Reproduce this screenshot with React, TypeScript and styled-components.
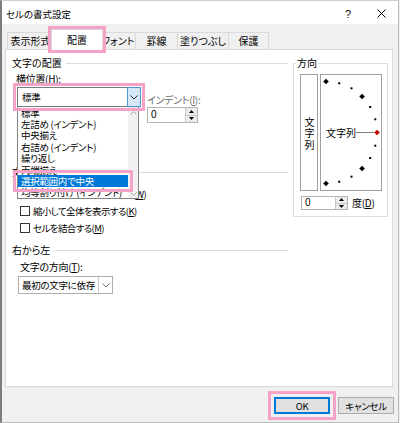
import React from "react";
import styled, { createGlobalStyle } from "styled-components";

const PINK = "#f4a2c8";
const FONT = `"Noto Sans CJK JP", "Noto Sans", sans-serif`;

const GlobalStyle = createGlobalStyle`
  html, body { margin: 0; padding: 0; background: #f0f0f0; }
  body {
    font-family: ${FONT};
    font-size: 10px;
    line-height: 12px;
    color: #000;
    font-feature-settings: "palt" 1;
  }
  * { box-sizing: border-box; }
`;

const Window = styled.div`
  width: 399px;
  height: 423px;
  background: #f0f0f0;
  border-left: 2px solid #7c7c7c;
  border-right: 1px solid #b9b9b9;
  border-top: 1px solid #cfcfcf;
  border-bottom: 1px solid #bdbdbd;
  display: flex;
  flex-direction: column;
`;

const TitleBar = styled.div`
  height: 23px;
  background: #fff;
  display: flex;
  align-items: center;
  padding: 2px 0 0 4px;
`;

const Title = styled.div`
  flex: 1;
  font-size: 9.5px;
`;

const TitleButton = styled.div<{ $w: number }>`
  width: ${(p) => p.$w}px;
  height: 100%;
  display: flex;
  align-items: center;
  justify-content: center;
  font-family: "Liberation Sans", sans-serif;
  font-size: 11px;
`;

const TabRow = styled.div`
  height: 25px;
  display: flex;
  align-items: flex-end;
  padding-left: 5px;
`;

const Tab = styled.div<{ $w: number; $active?: boolean }>`
  width: ${(p) => p.$w}px;
  height: ${(p) => (p.$active ? 21 : 17)}px;
  border: 1px solid #d9d9d9;
  border-bottom: none;
  background: ${(p) => (p.$active ? "#fff" : "#f0f0f0")};
  display: flex;
  align-items: center;
  justify-content: center;
  white-space: nowrap;
  padding-bottom: ${(p) => (p.$active ? 1 : 0)}px;
  margin-left: ${(p) => (p.$active ? -3 : -1)}px;
  margin-right: ${(p) => (p.$active ? -2 : 0)}px;
  margin-bottom: ${(p) => (p.$active ? -1 : 0)}px;
  position: ${(p) => (p.$active ? "relative" : "static")};
  z-index: ${(p) => (p.$active ? 2 : "auto")};
  outline: ${(p) => (p.$active ? `3px solid ${PINK}` : "none")};
  &:first-child { margin-left: 0; }
`;

const Panel = styled.div`
  margin-left: 3px;
  width: 388px;
  height: 338px;
  background: #fff;
  border: 1px solid #d9d9d9;
  padding: 7px 4px 0 6px;
  display: flex;
  align-items: flex-start;
  gap: 5px;
`;

const LeftCol = styled.div`
  width: 276px;
  display: flex;
  flex-direction: column;
`;

const SectionHeader = styled.div<{ $mt?: number }>`
  height: 12px;
  margin-top: ${(p) => p.$mt ?? 0}px;
  display: flex;
  align-items: center;
  gap: 4px;
  white-space: nowrap;
  &::after {
    content: "";
    flex: 1;
    height: 1px;
    background: #dcdcdc;
  }
`;

const HAlignRow = styled.div`
  display: flex;
  margin-top: 4px;
  margin-left: 4px;
`;

const FieldCol = styled.div`
  display: flex;
  flex-direction: column;
`;

const IndentCol = styled.div`
  display: flex;
  flex-direction: column;
  margin-left: 6px;
  padding-top: 21px;
`;

const FieldLabel = styled.div<{ $disabled?: boolean; $mt?: number; $ml?: number }>`
  height: 12px;
  white-space: nowrap;
  letter-spacing: -0.3px;
  color: ${(p) => (p.$disabled ? "#6d6d6d" : "#000")};
  margin-top: ${(p) => p.$mt ?? 0}px;
  margin-left: ${(p) => p.$ml ?? 0}px;
`;

const U = styled.span`
  text-decoration: underline;
  text-underline-offset: 1px;
`;

const ComboField = styled.div`
  position: relative;
  z-index: 5;
  margin-top: 2px;
  margin-left: 1px;
`;

const Combo = styled.div<{ $w: number; $h: number; $focus?: boolean; $ml?: number; $mt?: number }>`
  position: relative;
  z-index: 2;
  width: ${(p) => p.$w}px;
  height: ${(p) => p.$h}px;
  margin-left: ${(p) => p.$ml ?? 0}px;
  margin-top: ${(p) => p.$mt ?? 0}px;
  background: #fff;
  border: 1px solid ${(p) => (p.$focus ? "#7a7a7a" : "#adadad")};
  display: flex;
  align-items: stretch;
  outline: ${(p) => (p.$focus ? `3px solid ${PINK}` : "none")};
  outline-offset: 1px;
`;

const ComboValue = styled.div<{ $pl: number }>`
  flex: 1;
  display: flex;
  align-items: center;
  padding-left: ${(p) => p.$pl}px;
  white-space: nowrap;
  overflow: hidden;
  font-size: 9.5px;
  letter-spacing: -0.3px;
`;

const DropButton = styled.div<{ $hot?: boolean }>`
  width: 14px;
  flex: none;
  margin: ${(p) => (p.$hot ? "-1px -1px -1px 0" : "0")};
  background: ${(p) => (p.$hot ? "#d5e8f8" : "#fff")};
  border: ${(p) => (p.$hot ? "1px solid #4f93d2" : "none")};
  border-left: 1px solid ${(p) => (p.$hot ? "#4f93d2" : "#c8c8c8")};
  display: flex;
  align-items: center;
  justify-content: center;
`;

const DropList = styled.div`
  position: absolute;
  top: 19px;
  left: 0;
  width: 122px;
  height: 93px;
  background: #fff;
  border: 1px solid #828282;
  display: flex;
`;

const ListItems = styled.div`
  flex: 1;
  display: flex;
  flex-direction: column;
`;

const ListItem = styled.div<{ $selected?: boolean }>`
  height: 11.4px;
  flex: none;
  display: flex;
  align-items: center;
  padding-left: 3px;
  white-space: nowrap;
  font-size: 9.5px;
  letter-spacing: -0.3px;
  background: ${(p) => (p.$selected ? "#0078d7" : "transparent")};
  color: ${(p) => (p.$selected ? "#fff" : "#000")};
  position: ${(p) => (p.$selected ? "relative" : "static")};
  z-index: ${(p) => (p.$selected ? 3 : "auto")};
  outline: ${(p) => (p.$selected ? `3px solid ${PINK}` : "none")};
  outline-offset: 2px;
`;

const ScrollBar = styled.div`
  width: 10px;
  background: #f0f0f0;
  display: flex;
  flex-direction: column;
  justify-content: space-between;
  align-items: center;
  padding: 4px 0 2px;
`;

const SpinBox = styled.div<{ $w: number; $h: number; $mt?: number; $ml?: number }>`
  width: ${(p) => p.$w}px;
  height: ${(p) => p.$h}px;
  margin-top: ${(p) => p.$mt ?? 0}px;
  margin-left: ${(p) => p.$ml ?? 0}px;
  border: 1px solid #b5b5b5;
  background: #fff;
  display: flex;
`;

const SpinValue = styled.div`
  flex: 1;
  display: flex;
  align-items: center;
  padding-left: 3px;
  font-family: "Liberation Sans", sans-serif;
  font-size: 10px;
`;

const SpinButtons = styled.div`
  width: 12px;
  display: flex;
  flex-direction: column;
  border-left: 1px solid #c8c8c8;
`;

const SpinHalf = styled.div`
  flex: 1;
  background: #ececec;
  display: flex;
  align-items: center;
  justify-content: center;
  & + & { border-top: 1px solid #c8c8c8; }
`;

const CheckList = styled.div`
  margin-top: 10px;
  margin-left: 8px;
  display: flex;
  flex-direction: column;
  gap: 5px;
`;

const CheckRow = styled.label`
  height: 12px;
  display: flex;
  align-items: center;
  gap: 3px;
  white-space: nowrap;
  font-size: 9.5px;
  letter-spacing: -0.6px;
`;

const CheckBox = styled.span`
  width: 10px;
  height: 10px;
  border: 1px solid #333;
  background: #fff;
  flex: none;
`;

const Orientation = styled.fieldset`
  width: 95px;
  margin: 0;
  padding: 5px 5px 6px 6px;
  border: 1px solid #dcdcdc;
  min-width: 0;
`;

const Legend = styled.legend`
  padding: 0 1px;
  margin-left: -4px;
  line-height: 12px;
  font-size: 10px;
`;

const DialRow = styled.div`
  display: flex;
  gap: 2px;
`;

const VerticalBox = styled.div`
  width: 18px;
  height: 117px;
  border: 1px solid #a0a0a0;
  display: flex;
  align-items: center;
  justify-content: center;
  writing-mode: vertical-rl;
  text-orientation: upright;
  letter-spacing: 1.5px;
  padding-top: 4px;
`;

const DialBox = styled.div`
  position: relative;
  width: 62px;
  height: 117px;
  border: 1px solid #a0a0a0;
  display: flex;
  align-items: center;
  padding-left: 5px;
`;

const DialSvg = styled.svg`
  position: absolute;
  inset: 0;
`;

const DialText = styled.span`
  position: relative;
  white-space: nowrap;
`;

const DegreeRow = styled.div`
  display: flex;
  align-items: center;
  gap: 4px;
  margin-top: 5px;
  letter-spacing: -0.3px;
`;

const Footer = styled.div`
  flex: 1;
  display: flex;
  justify-content: flex-end;
  align-items: flex-start;
  gap: 8px;
  padding: 10px 4px 0 0;
`;

const Button = styled.div<{ $primary?: boolean }>`
  width: 56px;
  height: 17px;
  background: #e1e1e1;
  border: ${(p) => (p.$primary ? "2px solid #0078d7" : "1px solid #adadad")};
  display: flex;
  align-items: center;
  justify-content: center;
  font-size: 9.5px;
  letter-spacing: -0.3px;
  outline: ${(p) => (p.$primary ? `3px solid ${PINK}` : "none")};
  outline-offset: 3px;
`;

const Chevron = ({ color = "#222" }: { color?: string }) => (
  <svg width="8" height="5" viewBox="0 0 8 5">
    <polyline points="0.5,0.5 4,4 7.5,0.5" fill="none" stroke={color} strokeWidth="1" />
  </svg>
);

const ScrollChevron = ({ up }: { up?: boolean }) => (
  <svg width="7" height="4" viewBox="0 0 7 4">
    <polyline
      points={up ? "0.5,3.5 3.5,0.5 6.5,3.5" : "0.5,0.5 3.5,3.5 6.5,0.5"}
      fill="none"
      stroke="#a8a8a8"
      strokeWidth="1"
    />
  </svg>
);

const Tri = ({ up }: { up?: boolean }) => (
  <svg width="5" height="3" viewBox="0 0 5 3">
    <polygon points={up ? "0,3 2.5,0 5,3" : "0,0 2.5,3 5,0"} fill="#000" />
  </svg>
);

const CloseIcon = () => (
  <svg width="9" height="9" viewBox="0 0 9 9">
    <path d="M0.5 0.5 L8.5 8.5 M8.5 0.5 L0.5 8.5" stroke="#000" strokeWidth="1" />
  </svg>
);

const Spin = () => (
  <SpinButtons>
    <SpinHalf><Tri up /></SpinHalf>
    <SpinHalf><Tri /></SpinHalf>
  </SpinButtons>
);

const Dial = () => {
  const cx = 5;
  const cy = 57.5;
  const r = 51;
  const angles = [90, 75, 60, 45, 30, 15, 0, -15, -30, -45, -60, -75, -90];
  return (
    <DialSvg width="60" height="115" viewBox="0 0 60 115">
      <line x1="35" y1="57.5" x2="53" y2="57.5" stroke="#7f7f7f" strokeWidth="1" />
      {angles.map((a) => {
        const rad = (a * Math.PI) / 180;
        const x = cx + r * Math.cos(rad);
        const y = cy - r * Math.sin(rad);
        const big = Math.abs(a) === 90 || Math.abs(a) === 45 || a === 0;
        if (big) {
          const h = 2.8;
          return (
            <polygon
              key={a}
              points={`${x},${y - h} ${x + h},${y} ${x},${y + h} ${x - h},${y}`}
              fill={a === 0 ? "#c00000" : "#000"}
            />
          );
        }
        return <rect key={a} x={x - 1} y={y - 1} width="2" height="2" fill="#000" />;
      })}
    </DialSvg>
  );
};

const tabs = [
  { label: "表示形式", w: 47 },
  { label: "配置", w: 52, active: true },
  { label: "フォント", w: 36 },
  { label: "罫線", w: 43 },
  { label: "塗りつぶし", w: 52 },
  { label: "保護", w: 41 },
];

const hAlignItems = [
  "標準",
  "左詰め (インデント)",
  "中央揃え",
  "右詰め (インデント)",
  "繰り返し",
  "両端揃え",
  "選択範囲内で中央",
  "均等割り付け (インデント)",
];

export default function App() {
  return (
    <>
      <GlobalStyle />
      <Window>
        <TitleBar>
          <Title>セルの書式設定</Title>
          <TitleButton $w={34}>?</TitleButton>
          <TitleButton $w={33}>
            <CloseIcon />
          </TitleButton>
        </TitleBar>

        <TabRow>
          {tabs.map((t) => (
            <Tab key={t.label} $w={t.w} $active={t.active}>
              {t.label}
            </Tab>
          ))}
        </TabRow>

        <Panel>
          <LeftCol>
            <SectionHeader>文字の配置</SectionHeader>
            <HAlignRow>
              <FieldCol>
                <FieldLabel>
                  横位置(<U>H</U>):
                </FieldLabel>
                <ComboField>
                  <Combo $w={124} $h={20} $focus>
                    <ComboValue $pl={4}>標準</ComboValue>
                    <DropButton $hot>
                      <Chevron />
                    </DropButton>
                  </Combo>
                  <DropList>
                    <ListItems>
                      {hAlignItems.map((it) => (
                        <ListItem key={it} $selected={it === "選択範囲内で中央"}>
                          {it}
                        </ListItem>
                      ))}
                    </ListItems>
                    <ScrollBar>
                      <ScrollChevron up />
                      <ScrollChevron />
                    </ScrollBar>
                  </DropList>
                </ComboField>
              </FieldCol>
              <IndentCol>
                <FieldLabel $disabled>
                  インデント(<U>I</U>):
                </FieldLabel>
                <SpinBox $w={51} $h={16} $mt={1}>
                  <SpinValue>0</SpinValue>
                  <Spin />
                </SpinBox>
              </IndentCol>
            </HAlignRow>

            <FieldLabel $mt={2} $ml={6}>
              縦位置(<U>V</U>):
            </FieldLabel>
            <Combo $w={118} $h={18} $ml={6} $mt={2}>
              <ComboValue $pl={3}>中央揃え</ComboValue>
              <DropButton>
                <Chevron color="#7a7a7a" />
              </DropButton>
            </Combo>

            <SectionHeader $mt={9}>文字の制御</SectionHeader>
            <CheckList>
              <CheckRow>
                <CheckBox />
                <span>
                  折り返して全体を表示する(<U>W</U>)
                </span>
              </CheckRow>
              <CheckRow>
                <CheckBox />
                <span>
                  縮小して全体を表示する(<U>K</U>)
                </span>
              </CheckRow>
              <CheckRow>
                <CheckBox />
                <span>
                  セルを結合する(<U>M</U>)
                </span>
              </CheckRow>
            </CheckList>

            <SectionHeader $mt={10}>右から左</SectionHeader>
            <FieldLabel $mt={5} $ml={8}>
              文字の方向(<U>T</U>):
            </FieldLabel>
            <Combo $w={95} $h={18} $ml={6} $mt={3}>
              <ComboValue $pl={3}>最初の文字に依存</ComboValue>
              <DropButton>
                <Chevron color="#7a7a7a" />
              </DropButton>
            </Combo>
          </LeftCol>

          <Orientation>
            <Legend>方向</Legend>
            <DialRow>
              <VerticalBox>文字列</VerticalBox>
              <DialBox>
                <Dial />
                <DialText>文字列</DialText>
              </DialBox>
            </DialRow>
            <DegreeRow>
              <SpinBox $w={47} $h={14} $ml={1}>
                <SpinValue>0</SpinValue>
                <Spin />
              </SpinBox>
              <span>
                度(<U>D</U>)
              </span>
            </DegreeRow>
          </Orientation>
        </Panel>

        <Footer>
          <Button $primary>OK</Button>
          <Button>キャンセル</Button>
        </Footer>
      </Window>
    </>
  );
}
